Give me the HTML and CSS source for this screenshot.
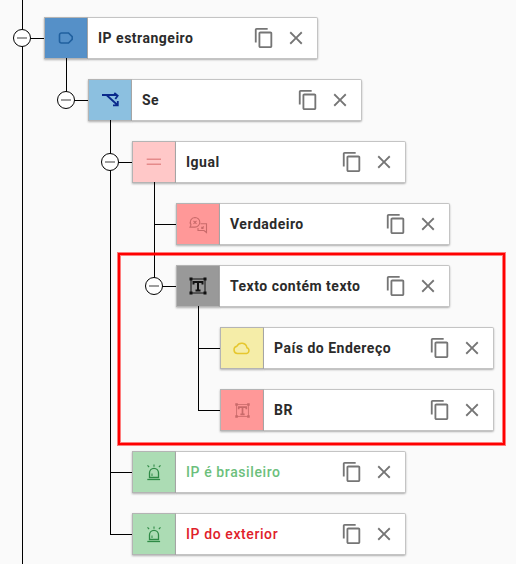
FILE: index.html
```html
<!DOCTYPE html>
<html lang="en">
<head>
  <meta charset="UTF-8"/>
  <title>Regra</title>
  <link rel="stylesheet" href="styles.css">
</head>
<body>

  <svg class="sprite" width="0" height="0">
    <symbol id="copy" viewBox="0 0 24 24">
      <path d="M16 1H4c-1.1 0-2 .9-2 2v14h2V3h12V1zm3 4H8c-1.1 0-2 .9-2 2v14c0 1.1.9 2 2 2h11c1.1 0 2-.9 2-2V7c0-1.1-.9-2-2-2zm0 16H8V7h11v14z"/>
    </symbol>
    <symbol id="close" viewBox="0 0 24 24">
      <path d="M19 6.41L17.59 5 12 10.59 6.41 5 5 6.41 10.59 12 5 17.59 6.41 19 12 13.41 17.59 19 19 17.59 13.41 12z"/>
    </symbol>
    <symbol id="text" viewBox="0 0 20 20">
      <path d="M3 3h14M3 17h14M3 3v14M17 3v14" fill="none" stroke="currentColor" stroke-width="1"/>
      <path d="M5.500 8.500V6h9v2.500M10 6v8.500M7.500 14.500h5" fill="none" stroke="currentColor" stroke-width="2"/>
      <path d="M1.500 1.500h3v3h-3zM15.500 1.500h3v3h-3zM1.500 15.500h3v3h-3zM15.500 15.500h3v3h-3z" fill="currentColor"/>
    </symbol>
    <symbol id="siren" viewBox="0 0 20 20">
      <path d="M5.500 15.500v-4.700a4.500 4.500 0 0 1 9 0v4.700z" fill="none" stroke="currentColor" stroke-width="1.300"/>
      <path d="M3.300 17.500h12.800" fill="none" stroke="currentColor" stroke-width="1.300"/>
      <path d="M8 14v-2.500" fill="none" stroke="currentColor" stroke-width="1"/>
      <path d="M10 2.500v2.200M3.500 3.300l1.600 1.700M16.500 3.300L14.900 5" fill="none" stroke="currentColor" stroke-width="1.100"/>
    </symbol>
  </svg>

  <div class="tree">

    <div class="node root">
      <div class="row">
        <span class="toggle"></span>
        <div class="box box-blue">
          <svg class="glyph glyph-label" viewBox="0 0 20 20"><path d="M5.500 5h7l3.700 3.700v2.600L12.500 15h-7a2 2 0 0 1-2-2V7a2 2 0 0 1 2-2z"/></svg>
        </div>
        <div class="card">
          <span class="name">IP estrangeiro</span>
          <svg class="action"><use href="#copy"/></svg>
          <svg class="action"><use href="#close"/></svg>
        </div>
      </div>

      <div class="children">
        <div class="node">
          <div class="row">
            <span class="toggle"></span>
            <div class="box box-sky">
              <svg class="glyph glyph-shuffle" viewBox="0 0 20 20"><path d="M2 5h15M7 5.500l10.500 9.500M14.300 3l3.400 2.700-2.400 3.300M13 15.400h4.800V11"/></svg>
            </div>
            <div class="card">
              <span class="name">Se</span>
              <svg class="action"><use href="#copy"/></svg>
              <svg class="action"><use href="#close"/></svg>
            </div>
          </div>

          <div class="children">
            <div class="node">
              <div class="row">
                <span class="toggle"></span>
                <div class="box box-pink">
                  <svg class="glyph glyph-equal" viewBox="0 0 20 20"><path d="M2.700 7.200h14.300M2.700 12.300h14.300"/></svg>
                </div>
                <div class="card">
                  <span class="name">Igual</span>
                  <svg class="action"><use href="#copy"/></svg>
                  <svg class="action"><use href="#close"/></svg>
                </div>
              </div>

              <div class="children">
                <div class="node">
                  <div class="row">
                    <div class="box box-salmon">
                      <svg class="glyph glyph-chat" viewBox="0 0 20 20"><path d="M7 3.500a4.800 4.800 0 0 1 0 9.600H2l1-2.200A4.800 4.800 0 0 1 7 3.500zM5.500 6.800l3 3M8.500 6.800l-3 3M12.500 9.800h6v8.700l-2.500-2h-6v-2.500M13.800 14.500l2-2M13.800 12.800v1.700h1.700"/></svg>
                    </div>
                    <div class="card">
                      <span class="name">Verdadeiro</span>
                      <svg class="action"><use href="#copy"/></svg>
                      <svg class="action"><use href="#close"/></svg>
                    </div>
                  </div>
                </div>

                <div class="node">
                  <div class="row">
                    <span class="toggle"></span>
                    <div class="box box-gray">
                      <svg class="glyph glyph-text"><use href="#text"/></svg>
                    </div>
                    <div class="card">
                      <span class="name">Texto contém texto</span>
                      <svg class="action"><use href="#copy"/></svg>
                      <svg class="action"><use href="#close"/></svg>
                    </div>
                  </div>

                  <div class="children">
                    <div class="node">
                      <div class="row">
                        <div class="box box-yellow">
                          <svg class="glyph glyph-cloud" viewBox="0 0 20 20"><path d="M5.500 15.500a3.700 3.700 0 0 1-.6-7.300 5.300 5.300 0 0 1 10 1.500 3 3 0 0 1-.4 5.800z"/></svg>
                        </div>
                        <div class="card">
                          <span class="name">País do Endereço</span>
                          <svg class="action"><use href="#copy"/></svg>
                          <svg class="action"><use href="#close"/></svg>
                        </div>
                      </div>
                    </div>

                    <div class="node">
                      <div class="row">
                        <div class="box box-salmon">
                          <svg class="glyph glyph-text-light"><use href="#text"/></svg>
                        </div>
                        <div class="card">
                          <span class="name">BR</span>
                          <svg class="action"><use href="#copy"/></svg>
                          <svg class="action"><use href="#close"/></svg>
                        </div>
                      </div>
                    </div>
                  </div>

                  <div class="highlight"></div>
                </div>
              </div>
            </div>

            <div class="node">
              <div class="row">
                <div class="box box-green">
                  <svg class="glyph glyph-siren"><use href="#siren"/></svg>
                </div>
                <div class="card">
                  <span class="name name-green">IP é brasileiro</span>
                  <svg class="action"><use href="#copy"/></svg>
                  <svg class="action"><use href="#close"/></svg>
                </div>
              </div>
            </div>

            <div class="node">
              <div class="row">
                <div class="box box-green">
                  <svg class="glyph glyph-siren"><use href="#siren"/></svg>
                </div>
                <div class="card">
                  <span class="name name-red">IP do exterior</span>
                  <svg class="action"><use href="#copy"/></svg>
                  <svg class="action"><use href="#close"/></svg>
                </div>
              </div>
            </div>
          </div>
        </div>
      </div>
    </div>

  </div>

</body>
</html>
```

FILE: styles.css
```css
html, body {
  margin: 0;
  height: 100%;
  overflow: hidden;
}

body {
  font-family: Roboto, Arial, sans-serif;
  background-color: #fafafa;
}

.sprite {
  position: absolute;
}

.tree {
  padding: 17px 0 0 44px;
}

.children {
  margin-top: 20px;
  padding-left: 44px;
}

.node {
  position: relative;
}

.children > .node {
  margin-top: 20px;
}

.children > .node:first-child {
  margin-top: 0;
}

/* tree lines */
.node::before {
  content: "";
  position: absolute;
  left: -22px;
  top: -21px;
  bottom: -21px;
  width: 1px;
  background-color: #000;
}

.node:last-child::before {
  bottom: auto;
  height: 42px;
}

.node::after {
  content: "";
  position: absolute;
  left: -22px;
  top: 21px;
  width: 22px;
  height: 1px;
  background-color: #000;
}

.root::before,
.root:last-child::before {
  top: -17px;
  bottom: auto;
  height: 564px;
}

.row {
  position: relative;
  display: flex;
  width: 274px;
  height: 42px;
}

/* the line down to the children starts under the box */
.row:not(:last-child)::after {
  content: "";
  position: absolute;
  left: 22px;
  top: 42px;
  width: 1px;
  height: 21px;
  background-color: #000;
}

.toggle {
  position: absolute;
  z-index: 1;
  left: -31px;
  top: 12px;
  box-sizing: border-box;
  width: 18px;
  height: 18px;
  border: 1px solid #000;
  border-radius: 50%;
  background-color: #fff;
}

.toggle::before {
  content: "";
  position: absolute;
  left: 3px;
  top: 7px;
  width: 10px;
  height: 2px;
  background-color: #9e9e9e;
}

.box {
  box-sizing: border-box;
  flex: none;
  display: flex;
  align-items: center;
  justify-content: center;
  width: 44px;
  height: 42px;
  border: 1px solid #b4b4b4;
  box-shadow: 0 1px 2px rgba(0,0,0,0.3);
}

.box-blue { background-color: #5590c8; }
.box-sky { background-color: #8cc0e0; }
.box-pink { background-color: #ffc8c8; }
.box-salmon { background-color: #ff9898; }
.box-gray { background-color: #999999; }
.box-yellow { background-color: #f5eda8; }
.box-green { background-color: #acdcb4; }

.glyph {
  width: 20px;
  height: 20px;
  fill: none;
  stroke-width: 1.5;
}

.glyph-label { stroke: #20609f; stroke-width: 1.6; }
.glyph-shuffle { stroke: #0a2a8c; stroke-width: 1.8; }
.glyph-equal { stroke: #e58a8a; stroke-width: 1.6; }
.glyph-chat { stroke: #c96a6a; stroke-width: 1.1; }
.glyph-text { color: #111; }
.glyph-text-light { color: #c96a6a; width: 17px; height: 17px; }
.glyph-cloud { stroke: #e6c72e; stroke-width: 1.5; }
.glyph-siren { color: #2f8a46; }

.card {
  box-sizing: border-box;
  flex: 1;
  display: flex;
  align-items: center;
  padding: 0 10px;
  background-color: #fff;
  border: 1px solid #c4c4c4;
  border-left: none;
  border-radius: 0 2px 2px 0;
  box-shadow: 0 1px 2px rgba(0,0,0,0.3);
}

.name {
  flex: 1;
  font-size: 14px;
  font-weight: 700;
  letter-spacing: 0.5px;
  color: #2b2b2b;
}

.name-green { color: #6cbf7c; font-weight: 500; letter-spacing: 0.6px; }
.name-red { color: #e0202a; font-weight: 500; letter-spacing: 0.6px; }

.action {
  width: 22px;
  height: 22px;
  fill: #757575;
  margin-left: 10px;
}

/* red frame around the selected block, soft on both edges */
.highlight {
  position: absolute;
  z-index: 2;
  left: -58px;
  top: -12px;
  box-sizing: border-box;
  width: 387px;
  height: 192px;
  border: 2px solid #f00;
  box-shadow: 0 0 0 1px rgba(255,0,0,0.5), inset 0 0 0 1px rgba(255,0,0,0.5);
}
```
